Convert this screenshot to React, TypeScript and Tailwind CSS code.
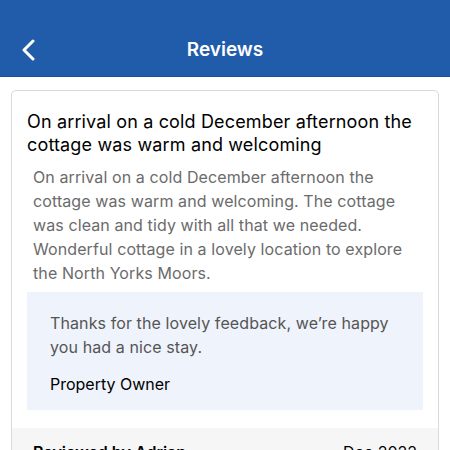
import React from "react";

export default function App() {
  return (
    <div className="w-[450px] h-[450px] overflow-hidden bg-white" style={{ fontFamily: "Inter, 'Noto Sans', sans-serif" }}>
      <div className="h-[77px] bg-[#215cab] border-b border-[#1b4f96] flex items-end pb-[13px] relative">
        <div className="absolute left-[20px] top-[39px]">
          <svg width="18" height="22" viewBox="0 0 18 22" fill="none">
            <path d="M13 2 L4 11 L13 20" stroke="white" strokeWidth="3" strokeLinecap="round" strokeLinejoin="round" />
          </svg>
        </div>
        <div className="w-full text-center text-white text-[19px] font-semibold leading-[26px]">Reviews</div>
      </div>
      <div className="px-[11px] pt-[13px]">
        <div className="border border-[#d9d9d9] rounded-[5px] overflow-hidden">
          <div className="px-[15px] pt-[19px]">
            <div className="text-[18px] leading-[23px] text-black tracking-[0.15px]">
              On arrival on a cold December afternoon the cottage was warm and welcoming
            </div>
            <div className="mt-[9px] pl-[6px] text-[16px] leading-[24px] text-[#6b6b6b] tracking-[0.1px]">
              On arrival on a cold December afternoon the cottage was warm and welcoming. The cottage was clean and tidy with all that we needed. Wonderful cottage in a lovely location to explore the North Yorks Moors.
            </div>
            <div className="mt-[7px] bg-[#eff3fc] px-[23px] pt-[19px] pb-[14px]">
              <div className="text-[16px] leading-[24px] text-[#555555] tracking-[0.1px]">
                Thanks for the lovely feedback, we’re happy you had a nice stay.
              </div>
              <div className="mt-[13px] text-[16px] leading-[24px] text-black">Property Owner</div>
            </div>
          </div>
          <div className="mt-[18px] bg-[#f6f6f6] px-[21px] pt-[12px] pb-[14px] flex justify-between text-[16px] leading-[24px] font-semibold text-black">
            <span>Reviewed by Adrian</span>
            <span className="font-normal">Dec 2022</span>
          </div>
        </div>
      </div>
    </div>
  );
}
